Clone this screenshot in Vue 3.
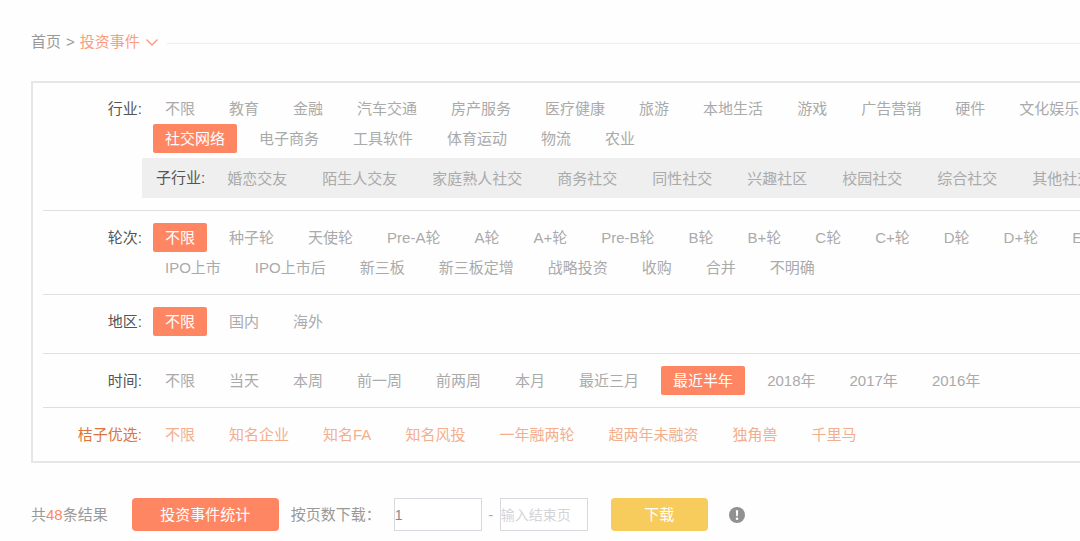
<script setup>
import { ref } from 'vue'

const groups = [
  {
    key: 'industry',
    label: '行业:',
    active: '社交网络',
    lines: [
      ['不限', '教育', '金融', '汽车交通', '房产服务', '医疗健康', '旅游', '本地生活', '游戏', '广告营销', '硬件', '文化娱乐'],
      ['社交网络', '电子商务', '工具软件', '体育运动', '物流', '农业'],
    ],
    sub: {
      label: '子行业:',
      items: ['婚恋交友', '陌生人交友', '家庭熟人社交', '商务社交', '同性社交', '兴趣社区', '校园社交', '综合社交', '其他社交'],
    },
  },
  {
    key: 'round',
    label: '轮次:',
    active: '不限',
    lines: [
      ['不限', '种子轮', '天使轮', 'Pre-A轮', 'A轮', 'A+轮', 'Pre-B轮', 'B轮', 'B+轮', 'C轮', 'C+轮', 'D轮', 'D+轮', 'E轮'],
      ['IPO上市', 'IPO上市后', '新三板', '新三板定增', '战略投资', '收购', '合并', '不明确'],
    ],
  },
  { key: 'region', label: '地区:', active: '不限', lines: [['不限', '国内', '海外']] },
  {
    key: 'time',
    label: '时间:',
    active: '最近半年',
    lines: [['不限', '当天', '本周', '前一周', '前两周', '本月', '最近三月', '最近半年', '2018年', '2017年', '2016年']],
  },
  {
    key: 'picks',
    label: '桔子优选:',
    active: '',
    lines: [['不限', '知名企业', '知名FA', '知名风投', '一年融两轮', '超两年未融资', '独角兽', '千里马']],
  },
]

const startPage = ref('1')
const endPage = ref('')
</script>

<template>
  <main class="page">
    <nav class="crumbs">
      <a href="#" class="home">首页</a>
      <span class="sep">&gt;</span>
      <a href="#" class="current">
        投资事件
        <svg class="chevron" width="14" height="9" viewBox="0 0 14 9" aria-hidden="true">
          <path d="M1.500 1.500 7 7l5.500-5.500" fill="none" stroke="currentColor" stroke-width="1.500" />
        </svg>
      </a>
      <span class="rule"></span>
    </nav>

    <section class="panel">
      <div v-for="g in groups" :key="g.key" class="group" :class="g.key">
        <span class="label">{{ g.label }}</span>
        <div class="lines">
          <div v-for="(line, i) in g.lines" :key="i" class="line">
            <a v-for="item in line" :key="item" href="#" class="item" :class="{ active: item === g.active }">{{ item }}</a>
          </div>
        </div>
        <div v-if="g.sub" class="sub">
          <span class="sub-label">{{ g.sub.label }}</span>
          <div class="line">
            <a v-for="item in g.sub.items" :key="item" href="#" class="item">{{ item }}</a>
          </div>
        </div>
      </div>
    </section>

    <form class="toolbar" @submit.prevent>
      <span class="count">共<b>48</b>条结果</span>
      <button type="button" class="btn stats">投资事件统计</button>
      <label for="start-page" class="caption">按页数下载：</label>
      <input id="start-page" v-model="startPage" type="text" />
      <span class="dash">-</span>
      <input id="end-page" v-model="endPage" type="text" placeholder="输入结束页" aria-label="结束页" />
      <button type="submit" class="btn download">下载</button>
      <svg class="info" width="16" height="16" viewBox="0 0 16 16" aria-hidden="true">
        <circle cx="8" cy="8" r="8" fill="#929092" />
        <path d="M6.800 3.200h2.400l-.4 6H7.200z" fill="#fff" />
        <circle cx="8" cy="11.700" r="1.300" fill="#fff" />
      </svg>
    </form>
  </main>
</template>

<style>
body {
  background: #fefefe;
}
</style>

<style scoped>
.page {
  padding: 27px 0 10px 31px;
  overflow: hidden;
  font-family: "Liberation Sans", "Noto Sans CJK SC", sans-serif;
  font-size: 15px;
  line-height: 30px;
  color: #aaa;
  white-space: nowrap;
}

a {
  color: inherit;
  text-decoration: none;
}

.crumbs {
  display: flex;
  align-items: center;
  height: 30px;
}

.home,
.sep {
  color: #999;
}

.sep {
  margin: 0 5px;
}

.current {
  display: flex;
  align-items: center;
  gap: 5px;
  color: #fb9c80;
}

.rule {
  flex: 1;
  height: 1px;
  margin-left: 8px;
  margin-top: 2px;
  background: #eee;
}

.panel {
  margin-top: 24px;
  padding-left: 10px;
  border: 2px solid #e6e6e6;
  border-right: 0;
}

.group {
  display: grid;
  grid-template-columns: 99px minmax(0, 1fr);
  padding: 12px 0;
}

.group + .group {
  border-top: 1px solid #dfdfe1;
}

.group.industry {
  padding-top: 11px;
}

.group.region {
  padding-bottom: 17px;
}

.label {
  line-height: 29px;
  text-align: right;
  color: #555;
}

.lines {
  display: grid;
  gap: 1px;
  padding-left: 11px;
  overflow: hidden;
}

.line {
  display: flex;
  gap: 10px;
}

.item {
  flex: none;
  padding: 0 12px;
  border-radius: 2px;
  line-height: 29px;
}

.item.active {
  background: #ff8663;
  color: #fff;
}

.sub {
  grid-column: 2;
  display: flex;
  align-items: center;
  gap: 10px;
  height: 40px;
  margin-top: 5px;
  padding-left: 14px;
  overflow: hidden;
  background: #efefef;
}

.sub-label {
  color: #555;
}

.sub .line {
  gap: 11px;
}

.picks {
  color: #f3ae8e;
}

.picks .label {
  color: #dc7440;
}

.toolbar {
  display: flex;
  align-items: center;
  margin-top: 35px;
}

.count {
  color: #999;
}

.count b {
  font-weight: normal;
  color: #ff8663;
}

.btn {
  height: 33px;
  padding: 0;
  border: 0;
  border-radius: 4px;
  font: inherit;
  color: #fff;
}

.stats {
  width: 147px;
  margin-left: 24px;
  background: #ff8663;
}

.download {
  width: 97px;
  margin-left: 23px;
  background: #f7cb5c;
}

.caption {
  width: 103px;
  margin-left: 12px;
  color: #999;
}

input {
  box-sizing: border-box;
  width: 88px;
  height: 33px;
  padding: 0;
  border: 1px solid #d8d8de;
  background: #fff;
  font: inherit;
  font-size: 14px;
  color: #888;
}

input::placeholder {
  color: #d4d4d8;
  opacity: 1;
}

.dash {
  width: 18px;
  text-align: center;
}

.info {
  margin-left: 21px;
}
</style>
